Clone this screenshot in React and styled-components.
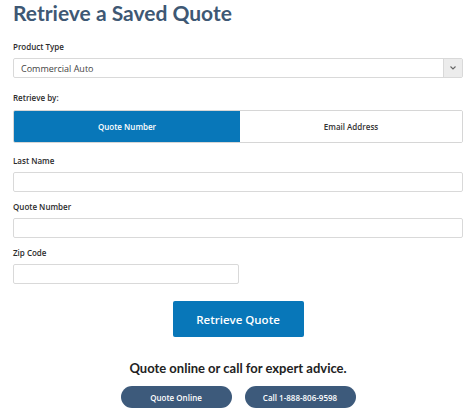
import React, { useState } from "react";
import styled, { createGlobalStyle } from "styled-components";

const GlobalStyle = createGlobalStyle`
  *, *::before, *::after {
    box-sizing: border-box;
  }
  body {
    margin: 0;
    background: #fff;
    font-family: "Open Sans", "Liberation Sans", sans-serif;
  }
`;

const Page = styled.div`
  width: 474px;
  padding: 0 11px 0 13px;
`;

const Title = styled.h1`
  margin: 0;
  padding-top: 1px;
  height: 25px;
  font-family: "Lato", "Liberation Sans", sans-serif;
  font-weight: 700;
  font-size: 21px;
  line-height: 24px;
  color: #3e5874;
`;

const Label = styled.div`
  font-size: 8px;
  font-weight: 600;
  color: #2b2b2b;
  line-height: 12px;
  margin-top: ${(p) => p.$top || 9}px;
  margin-bottom: 5px;
`;

const SelectBox = styled.div`
  display: flex;
  height: 20px;
  border: 1px solid #d9d9d9;
  border-radius: 2px;
  font-size: 9px;
  color: #444;
`;

const SelectText = styled.div`
  flex: 1;
  display: flex;
  align-items: center;
  padding-left: 7px;
`;

const SelectArrow = styled.div`
  width: 19px;
  background: #ececec;
  border-left: 1px solid #d9d9d9;
  display: flex;
  align-items: center;
  justify-content: center;
`;

const Toggle = styled.div`
  display: grid;
  grid-template-columns: 226px 1fr;
  height: 33px;
  margin-top: 6px;
  border: 1px solid #d6d6d6;
  border-radius: 2px;
  overflow: hidden;
`;

const ToggleItem = styled.div`
  display: flex;
  align-items: center;
  justify-content: center;
  font-size: 8px;
  font-weight: 600;
  cursor: pointer;
  background: ${(p) => (p.$active ? "#0877b9" : "#fff")};
  color: ${(p) => (p.$active ? "#fff" : "#333")};
`;

const Input = styled.div`
  height: 20px;
  width: ${(p) => p.$width || "auto"};
  border: 1px solid #d9d9d9;
  border-radius: 2px;
`;

const Center = styled.div`
  display: flex;
  flex-direction: column;
  align-items: center;
`;

const PrimaryButton = styled.button`
  margin-top: 17px;
  width: 131px;
  height: 36px;
  border: none;
  border-radius: 2px;
  background: #0877b9;
  color: #fff;
  font-family: "Open Sans", "Liberation Sans", sans-serif;
  font-size: 11.5px;
  font-weight: 600;
`;

const Tagline = styled.div`
  margin-top: 23px;
  font-family: "Lato", "Liberation Sans", sans-serif;
  font-size: 13px;
  font-weight: 700;
  color: #222;
  line-height: 16px;
`;

const PillRow = styled.div`
  display: flex;
  gap: 13px;
  margin-top: 10px;
`;

const Pill = styled.button`
  width: 111px;
  height: 22px;
  border: none;
  border-radius: 11px;
  background: #3d5a7b;
  color: #fff;
  font-family: "Open Sans", "Liberation Sans", sans-serif;
  font-size: 8px;
  font-weight: 600;
`;

export default function App() {
  const [mode, setMode] = useState("quote");
  return (
    <Page>
      <GlobalStyle />
      <Title>Retrieve a Saved Quote</Title>
      <Label $top={16}>Product Type</Label>
      <SelectBox>
        <SelectText>Commercial Auto</SelectText>
        <SelectArrow>
          <svg width="6" height="4" viewBox="0 0 6 4">
            <path d="M0.5 0.5 L3 3 L5.5 0.5" fill="none" stroke="#666" strokeWidth="1.1" />
          </svg>
        </SelectArrow>
      </SelectBox>
      <Label $top={14}>Retrieve by:</Label>
      <Toggle>
        <ToggleItem $active={mode === "quote"} onClick={() => setMode("quote")}>
          Quote Number
        </ToggleItem>
        <ToggleItem $active={mode === "email"} onClick={() => setMode("email")}>
          Email Address
        </ToggleItem>
      </Toggle>
      <Label $top={12}>Last Name</Label>
      <Input />
      <Label>Quote Number</Label>
      <Input />
      <Label>Zip Code</Label>
      <Input $width="226px" />
      <Center>
        <PrimaryButton>Retrieve Quote</PrimaryButton>
        <Tagline>Quote online or call for expert advice.</Tagline>
        <PillRow>
          <Pill>Quote Online</Pill>
          <Pill>Call 1-888-806-9598</Pill>
        </PillRow>
      </Center>
    </Page>
  );
}
